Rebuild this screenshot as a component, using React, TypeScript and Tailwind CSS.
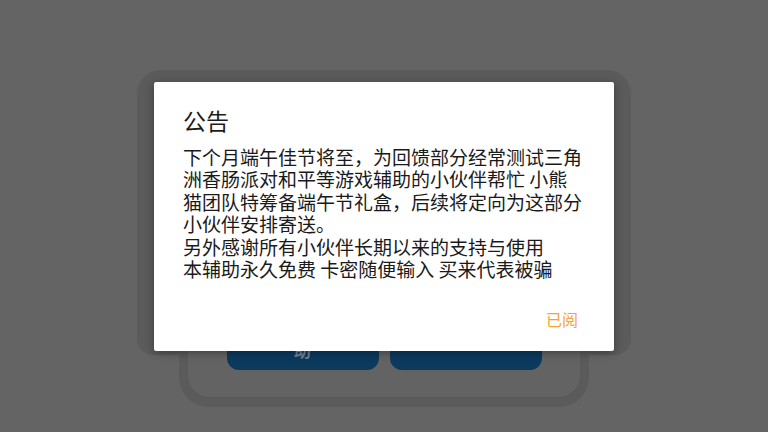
const lines = [
  "下个月端午佳节将至，为回馈部分经常测试三角",
  "洲香肠派对和平等游戏辅助的小伙伴帮忙 小熊",
  "猫团队特筹备端午节礼盒，后续将定向为这部分",
  "小伙伴安排寄送。",
  "另外感谢所有小伙伴长期以来的支持与使用",
  "本辅助永久免费 卡密随便输入 买来代表被骗",
];

const font = { fontFamily: "'Noto Sans CJK SC', 'Noto Sans', sans-serif" };

export default function App() {
  return (
    <div className="relative h-[432px] w-[768px] overflow-hidden bg-[#646464]" style={font}>
      {/* dimmed app behind the notice */}
      <div className="mx-auto mt-[70px] flex w-[494px] flex-col items-center">
        <div className="h-[285px] w-full rounded-t-[24px] rounded-b-[16px] bg-[#5b5b5b]"></div>
        <div className="-mt-[60px] w-[410px] rounded-b-[30px] bg-[#5b5b5b] px-[8px] pb-[9px]">
          <div className="flex justify-center gap-[11px] rounded-b-[22px] border-x border-b border-[#595959] bg-[#636363] pt-[23px] pb-[27px]">
            <div className="flex h-[52px] w-[152px] items-end justify-center rounded-[12px] bg-[#0b3a5d] pb-[8px] text-[17px] font-bold text-[#6f8193]">
              助
            </div>
            <div className="h-[52px] w-[152px] rounded-[12px] bg-[#0b3a5d]"></div>
          </div>
        </div>
      </div>

      {/* notice dialog */}
      <div className="absolute inset-0 flex items-center justify-center">
        <div className="w-[460px] rounded-[2px] bg-white pt-[22px] pr-[36px] pb-[20px] pl-[29px] shadow-[0_2px_8px_rgba(0,0,0,0.35)]">
          <div className="text-[23px] leading-[32px] text-[#1c1c1c]">公告</div>
          <div className="mt-[10px] text-[19px] leading-[22.5px] text-[#1a1a1a]">
            {lines.map((l) => (
              <div key={l} className="whitespace-nowrap">{l}</div>
            ))}
          </div>
          <div className="mt-[26px] flex justify-end">
            <span className="text-[16px] leading-[24px] text-[#f2a43a]">已阅</span>
          </div>
        </div>
      </div>
    </div>
  );
}
